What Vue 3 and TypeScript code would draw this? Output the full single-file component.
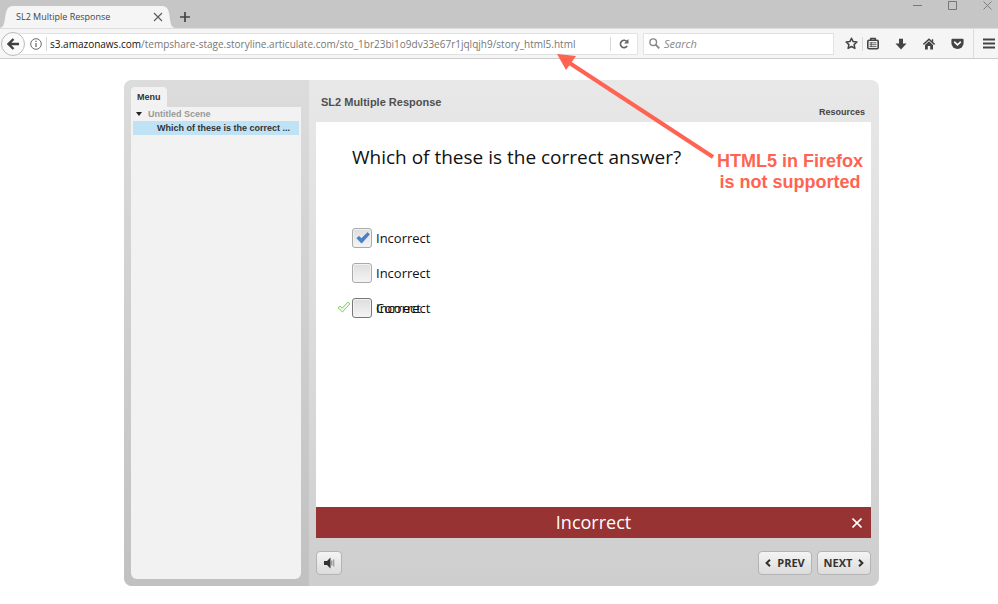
<script setup lang="ts">
import { ref } from 'vue'

interface Choice {
  id: string
  label: string
  checked: boolean
  answer?: string
}

const title = 'SL2 Multiple Response'
const host = 's3.amazonaws.com'
const path = '/tempshare-stage.storyline.articulate.com/sto_1br23bi1o9dv33e67r1jqlqjh9/story_html5.html'
const search = ref('')

const choices = ref<Choice[]>([
  { id: 'choice-1', label: 'Incorrect', checked: true },
  { id: 'choice-2', label: 'Incorrect', checked: false },
  { id: 'choice-3', label: 'Incorrect', checked: false, answer: 'Correct' },
])
</script>

<template>
  <div class="browser">
    <header class="tabstrip">
      <div class="tab">
        <svg class="tab-edge" width="12" height="22" viewBox="0 0 12 22"><path d="M0 22C8 21 2 1 12 0V22Z" /></svg>
        <div class="tab-body">
          <span class="tab-title">{{ title }}</span>
          <button class="plain" aria-label="Close tab">
            <svg width="10" height="10" viewBox="0 0 10 10"><path d="M1 1 9 9M9 1 1 9" stroke="#5a5a5a" stroke-width="1.1" /></svg>
          </button>
        </div>
        <svg class="tab-edge" width="12" height="22" viewBox="0 0 12 22"><path d="M12 22C4 21 10 1 0 0V22Z" /></svg>
      </div>
      <button class="plain new-tab" aria-label="New tab">
        <svg width="10" height="10" viewBox="0 0 10 10"><path d="M5 0V10M0 5H10" stroke="#444" stroke-width="1.7" /></svg>
      </button>
      <div class="window-controls">
        <button class="plain" aria-label="Minimize">
          <svg width="9" height="9" viewBox="0 0 9 9"><path d="M0 4.500H9" stroke="#777" /></svg>
        </button>
        <button class="plain" aria-label="Maximize">
          <svg width="9" height="9" viewBox="0 0 9 9"><path d="M.5.5H8.500V8.500H.5Z" fill="none" stroke="#777" /></svg>
        </button>
        <button class="plain" aria-label="Close window">
          <svg width="9" height="9" viewBox="0 0 9 9"><path d="M.5.5 8.500 8.500M8.500.5.5 8.500" stroke="#777" stroke-width=".9" /></svg>
        </button>
      </div>
    </header>

    <nav class="toolbar">
      <button class="plain back" aria-label="Back">
        <svg width="12" height="12" viewBox="0 0 12 12"><path d="M6.500 1 1.500 6l5 5M2 6H12" fill="none" stroke="#404040" stroke-width="2.400" /></svg>
      </button>
      <div class="urlbar">
        <svg width="12" height="12" viewBox="0 0 12 12"><circle cx="6" cy="6" r="5.300" fill="none" stroke="#6a6a6a" stroke-width="1" /><path d="M6 5V9M6 2.800V4" stroke="#6a6a6a" stroke-width="1.300" /></svg>
        <span class="divider"></span>
        <span class="url"><b>{{ host }}</b>{{ path }}</span>
        <button class="plain reload" aria-label="Reload">
          <svg width="10" height="10" viewBox="0 0 10 10"><path d="M8 2.600A3.700 3.700 0 1 0 8.200 7" fill="none" stroke="#666" stroke-width="1.600" /><path d="M9.500 0V4.500H5Z" fill="#666" /></svg>
        </button>
      </div>
      <div class="search">
        <svg width="11" height="11" viewBox="0 0 11 11"><circle cx="4.200" cy="4.200" r="3.300" fill="none" stroke="#888" stroke-width="1.400" /><path d="M6.600 6.600 10.300 10.300" stroke="#888" stroke-width="1.900" /></svg>
        <input v-model="search" type="search" placeholder="Search" aria-label="Search" />
      </div>
      <div class="tools">
        <button class="plain" aria-label="Bookmark">
          <svg width="13" height="13" viewBox="0 0 13 13"><path d="M6.500 1.200 8.100 4.600 11.900 5 9.100 7.600 9.900 11.400 6.500 9.500 3.100 11.400 3.900 7.600 1.100 5 4.900 4.600Z" fill="none" stroke="#444" stroke-width="1.500" stroke-linejoin="round" /></svg>
        </button>
        <span class="divider"></span>
        <button class="plain" aria-label="Bookmarks list">
          <svg width="12" height="13" viewBox="0 0 12 13"><rect x=".8" y="3.300" width="10.400" height="8.500" rx="1.200" fill="none" stroke="#444" stroke-width="1.600" /><path d="M3.800 3V1.500H8.200V3" fill="none" stroke="#444" stroke-width="1.500" /><path d="M2.500 5.800H9.500M2.500 7.700H9.500M2.500 9.600H9.500M4.200 5V10" stroke="#444" stroke-width=".8" /></svg>
        </button>
        <button class="plain" aria-label="Downloads">
          <svg width="12" height="12" viewBox="0 0 12 12"><path d="M4 .8H8V5.500H11.500L6 11.400.5 5.500H4Z" fill="#444" /></svg>
        </button>
        <button class="plain" aria-label="Home">
          <svg width="12" height="12" viewBox="0 0 12 12"><path d="M.4 6.500 6 1.200 11.600 6.500" fill="none" stroke="#444" stroke-width="1.500" /><path d="M2 7 6 3.200 10 7V11.500H7.200V8H4.800V11.500H2ZM8.800 1.200H10.200V4.500L8.800 3.200Z" fill="#444" /></svg>
        </button>
        <button class="plain" aria-label="Pocket">
          <svg width="13" height="12" viewBox="0 0 13 12"><path d="M1.600.8H11.400Q12.600.8 12.600 2V5A6.100 6.100 0 0 1 .4 5V2Q.4.8 1.600.8Z" fill="#444" /><path d="M3.600 4.200 6.500 6.900 9.400 4.200" fill="none" stroke="#fff" stroke-width="1.600" stroke-linecap="round" /></svg>
        </button>
        <button class="plain menu" aria-label="Open menu">
          <svg width="12" height="11" viewBox="0 0 12 11"><path d="M0 1.500H12M0 5.500H12M0 9.500H12" stroke="#444" stroke-width="2" /></svg>
        </button>
      </div>
    </nav>

    <main class="player">
      <aside class="sidebar">
        <h2 class="menu-tab">Menu</h2>
        <div class="outline">
          <div class="scene">
            <svg width="6" height="4" viewBox="0 0 6 4"><path d="M0 0H6L3 4Z" fill="#222" /></svg>
            <span>Untitled Scene</span>
          </div>
          <a class="slide-link" href="#slide">Which of these is the correct ...</a>
        </div>
      </aside>

      <section class="stage">
        <div class="stage-head">
          <h1>{{ title }}</h1>
          <a class="resources" href="#resources">Resources</a>
        </div>

        <div id="slide" class="slide">
          <h2 class="question">Which of these is the correct answer?</h2>
          <ul class="choices">
            <li v-for="choice in choices" :key="choice.id" :class="{ right: choice.answer }">
              <svg v-if="choice.answer" class="mark" width="14" height="12" viewBox="0 0 14 12"><path d="M1 6.800 3 5 5.200 7.200 11 1 13 2.800 5.400 11Z" fill="#effbe9" stroke="#7fcd68" stroke-width="1" /></svg>
              <span class="box">
                <input :id="choice.id" v-model="choice.checked" type="checkbox" />
                <svg v-if="choice.checked" class="tick" width="14" height="12" viewBox="0 0 14 12"><path d="M.8 6.200 3 4.200 5.400 6.600 11.600.6 13.400 2.400 5.600 11.200Z" fill="#4a80c8" stroke="#3f74bd" stroke-width=".6" stroke-linejoin="round" /></svg>
              </span>
              <label :for="choice.id">{{ choice.label }}<span v-if="choice.answer" class="answer">{{ choice.answer }}</span></label>
            </li>
          </ul>
          <div class="feedback" role="status">
            <span>Incorrect</span>
            <button class="plain dismiss" aria-label="Dismiss">
              <svg width="10" height="10" viewBox="0 0 10 10"><path d="M.5.5 9.500 9.500M9.500.5.5 9.500" stroke="#fff" stroke-width="1.600" /></svg>
            </button>
          </div>
        </div>

        <div class="controls">
          <button class="control volume" aria-label="Volume">
            <svg width="11" height="12" viewBox="0 0 11 12"><path d="M0 4H3L6.500.6V11.400L3 8H0Z" fill="#333" /><path d="M7.800 3.500V8.500" stroke="#777" stroke-width="1" /><path d="M9.700 2.500V9.500" stroke="#999" stroke-width="1.200" /></svg>
          </button>
          <button class="control prev">
            <svg width="6" height="8" viewBox="0 0 6 8"><path d="M5 .8 1.600 4 5 7.200" fill="none" stroke="#333" stroke-width="2" /></svg>
            PREV
          </button>
          <button class="control next">
            NEXT
            <svg width="6" height="8" viewBox="0 0 6 8"><path d="M1 .8 4.400 4 1 7.200" fill="none" stroke="#333" stroke-width="2" /></svg>
          </button>
        </div>
      </section>
    </main>

    <svg class="arrow" width="162" height="108" viewBox="0 0 162 108"><path d="M12 8 157 103" stroke="#ff6352" stroke-width="4" /><path d="M1 0 20 2 10 16Z" fill="#ff6352" /></svg>
    <p class="note">HTML5 in Firefox<br />is not supported</p>
  </div>
</template>

<style>
body {
  margin: 0;
  background: #fff;
}
</style>

<style scoped>
* {
  box-sizing: border-box;
}

.browser {
  position: relative;
  font-family: "Liberation Sans", Arial, sans-serif;
  color: #444;
}

h1,
h2,
p,
ul {
  margin: 0;
  padding: 0;
}

svg {
  display: block;
  flex: none;
}

a {
  color: inherit;
  text-decoration: none;
}

.plain {
  display: flex;
  align-items: center;
  justify-content: center;
  padding: 0;
  border: 0;
  background: none;
}

.tabstrip {
  display: flex;
  align-items: flex-end;
  height: 28px;
  background: #c6c6c6;
}

.tab {
  display: flex;
  height: 22px;
}

.tab-edge {
  fill: #f5f5f5;
}

.tab-body {
  display: flex;
  align-items: center;
  justify-content: space-between;
  width: 151px;
  padding: 0 0 0 4px;
  background: #f5f5f5;
}

.tab-title {
  font: 9px/20px "Open Sans", sans-serif;
  color: #444;
}

.new-tab {
  height: 22px;
  margin-left: 5px;
}

.window-controls {
  display: flex;
  align-self: flex-start;
  gap: 26px;
  margin-left: auto;
  padding: 1px 6px 0 0;
}

.toolbar {
  display: flex;
  align-items: center;
  height: 31px;
  padding-left: 1px;
  background: #f5f5f5;
  border-top: 1px solid #ddd;
  border-bottom: 1px solid #ccc;
}

.back {
  flex: none;
  z-index: 1;
  width: 24px;
  height: 24px;
  border: 1px solid #bbb;
  border-radius: 50%;
  background: #fafafa;
}

.urlbar,
.search {
  display: flex;
  align-items: center;
  height: 22px;
  border: 1px solid #e2e2e2;
  background: #fff;
}

.urlbar {
  flex: 1;
  min-width: 0;
  margin-left: -6px;
  padding-left: 10px;
}

.divider {
  flex: none;
  width: 1px;
  height: 14px;
  margin: 0 3px 0 4px;
  background: #d8d8d8;
}

.url {
  flex: 1;
  overflow: hidden;
  white-space: nowrap;
  font: 10px/20px "Open Sans", sans-serif;
  color: #777;
}

.url b {
  font-weight: 400;
  color: #111;
}

.reload {
  width: 27px;
  height: 14px;
  border-left: 1px solid #d8d8d8;
}

.search {
  width: 191px;
  margin-left: 5px;
  padding-left: 5px;
}

.search input {
  width: 100%;
  min-width: 0;
  padding: 0 0 0 4px;
  border: 0;
  outline: 0;
  background: none;
  font: italic 11px/20px "Open Sans", sans-serif;
}

.search input::placeholder {
  color: #888;
}

.tools {
  display: flex;
  align-items: center;
  gap: 16px;
  padding-left: 11px;
}

.tools .divider {
  margin: 0 -12px;
}

.menu {
  width: 25px;
  height: 29px;
  margin-left: -7px;
  padding-left: 6px;
  border-left: 1px solid #ddd;
}

.player {
  display: flex;
  height: 506px;
  margin: 21px 119px 0 124px;
  border-radius: 8px;
  overflow: hidden;
  background: linear-gradient(#e8e8e8, #cecece);
}

.sidebar {
  display: flex;
  flex-direction: column;
  align-items: flex-start;
  width: 185px;
  padding: 7px 8px 7px 7px;
  background: linear-gradient(#dcdcdc, #c1c1c1);
}

.menu-tab {
  padding: 0 6px;
  border-radius: 4px 4px 0 0;
  background: #f2f2f2;
  font-size: 9px;
  line-height: 20px;
  color: #333;
}

.outline {
  flex: 1;
  align-self: stretch;
  padding: 0 2px;
  border-radius: 0 0 6px 6px;
  background: #f2f2f2;
  font-size: 9px;
  font-weight: 700;
  line-height: 14px;
}

.scene {
  display: flex;
  align-items: center;
  gap: 6px;
  padding-left: 3px;
  color: #999;
}

.slide-link {
  display: block;
  padding-left: 24px;
  background: #bfe2f4;
  color: #333;
  white-space: nowrap;
}

.stage {
  display: flex;
  flex: 1;
  flex-direction: column;
  min-width: 0;
  padding: 0 8px 0 7px;
}

.stage-head {
  display: flex;
  align-items: flex-end;
  justify-content: space-between;
  height: 42px;
  padding: 0 6px 4px 5px;
}

.stage-head h1 {
  margin-bottom: 8px;
  font-size: 11px;
  line-height: 16px;
  color: #505050;
}

.resources {
  font-size: 9px;
  font-weight: 700;
  line-height: 12px;
}

.slide {
  display: flex;
  flex-direction: column;
  height: 416px;
  background: #fff;
  font-family: "Open Sans", sans-serif;
  color: #111;
}

.question {
  padding: 22px 36px 0;
  font-size: 19px;
  font-weight: 400;
  line-height: 26px;
}

.choices {
  display: flex;
  flex-direction: column;
  gap: 13px;
  padding: 57px 36px 0;
  list-style: none;
}

.choices li {
  position: relative;
  display: flex;
  align-items: center;
  gap: 4px;
  font-size: 13px;
  line-height: 22px;
}

.box {
  position: relative;
  display: flex;
}

.box input {
  appearance: none;
  width: 20px;
  height: 20px;
  margin: 0;
  border: 1px solid #aaa;
  border-radius: 3px;
  background: linear-gradient(#dedede, #f4f4f4);
  box-shadow: inset 0 0 0 1px #f2f2f2;
}

.right .box input {
  border-color: #777;
}

.tick {
  position: absolute;
  top: 4px;
  left: 4px;
  pointer-events: none;
}

.mark {
  position: absolute;
  top: 4px;
  left: -15px;
}

.choices label {
  position: relative;
}

.answer {
  position: absolute;
  top: 0;
  left: 0;
}

.feedback {
  display: grid;
  grid-template-columns: 1fr auto 1fr;
  align-items: center;
  margin-top: auto;
  padding: 0 9px;
  background: #973332;
  color: #fff;
  font-size: 18px;
  line-height: 31px;
}

.feedback span {
  grid-column: 2;
}

.dismiss {
  justify-self: end;
}

.controls {
  display: flex;
  gap: 5px;
  padding-top: 13px;
}

.control {
  display: flex;
  align-items: center;
  justify-content: center;
  gap: 6px;
  width: 54px;
  height: 24px;
  padding: 0;
  border: 1px solid #b4b4b4;
  border-radius: 4px;
  background: linear-gradient(#f4f4f4, #dcdcdc);
  font: 700 11px/20px "Open Sans", sans-serif;
  color: #333;
}

.volume {
  width: 26px;
  margin-right: auto;
}

.arrow {
  position: absolute;
  top: 54px;
  left: 556px;
}

.note {
  position: absolute;
  top: 151px;
  left: 717px;
  color: #ff6352;
  font-size: 18px;
  font-weight: 700;
  line-height: 21px;
  text-align: center;
  white-space: nowrap;
}
</style>
